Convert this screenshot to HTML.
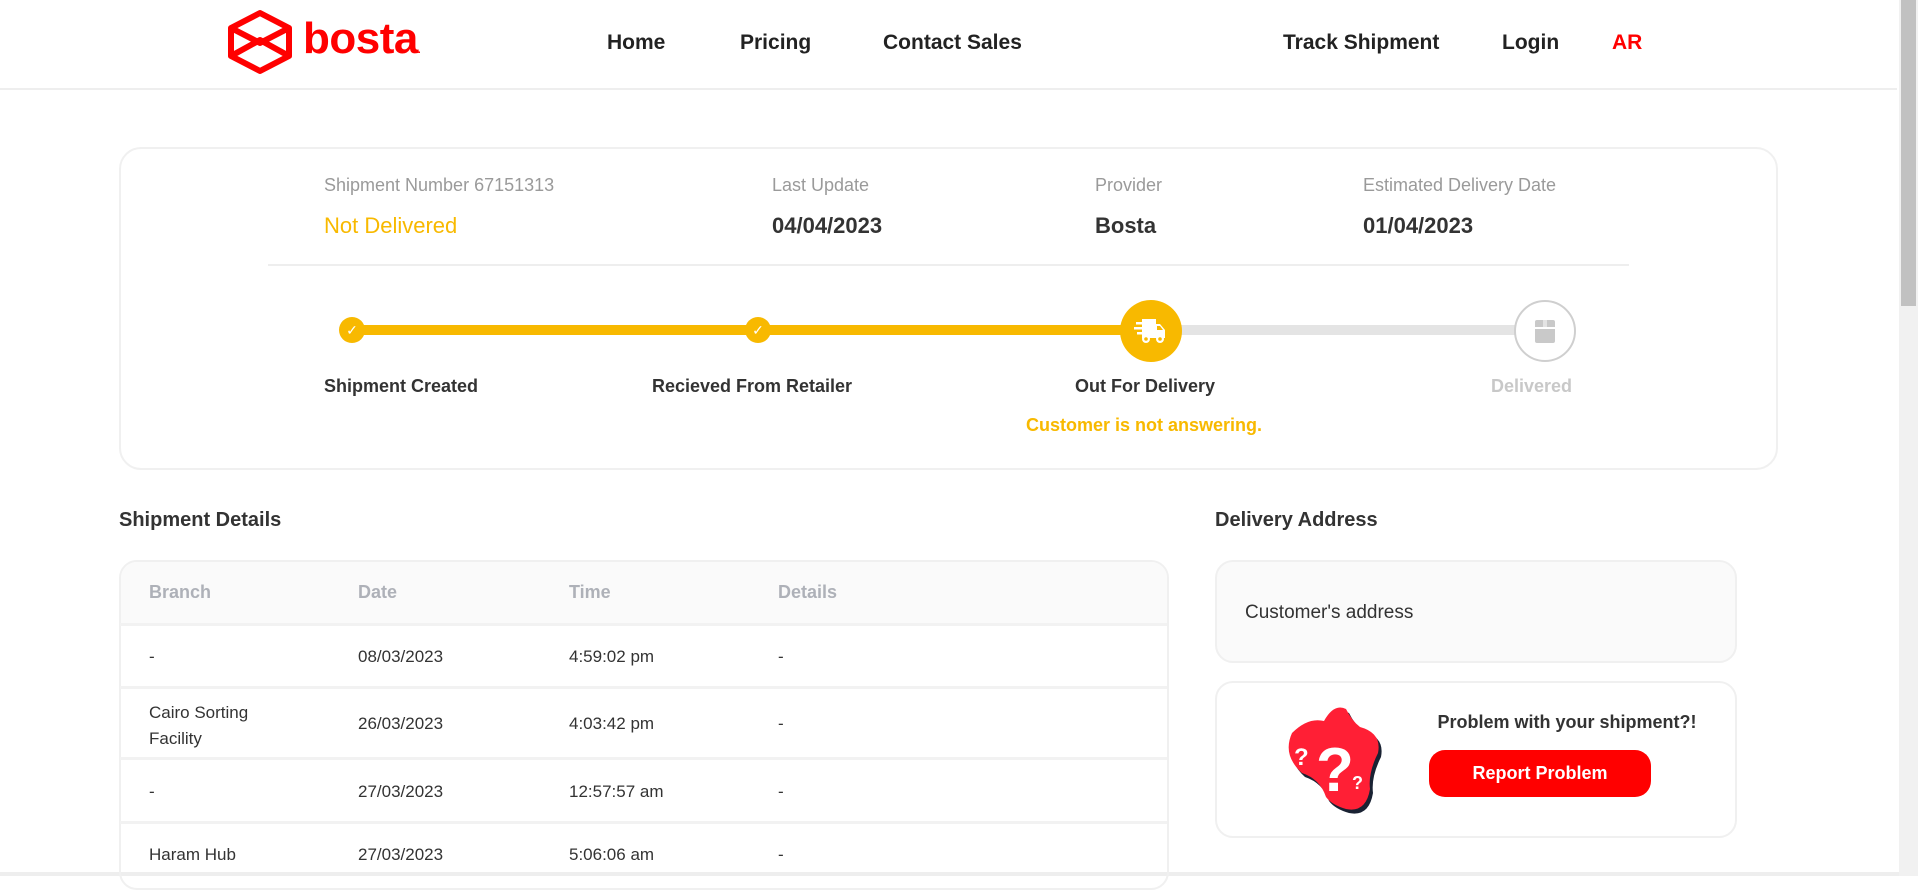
<!DOCTYPE html>
<html><head><meta charset="utf-8"><style>
*{margin:0;padding:0;box-sizing:border-box}
body{width:1918px;height:876px;overflow:hidden;background:#fff;font-family:"Liberation Sans",Arial,sans-serif;color:#333;position:relative}
.a{position:absolute;white-space:nowrap}
.nav{font-weight:bold;font-size:21px;color:#222;top:31px}
.lbl{font-size:18px;color:#9a9a9a;top:175px}
.val{font-size:22px;font-weight:bold;color:#333;top:213px}
.step{font-size:18px;font-weight:bold;color:#333;top:376px}
.th{font-size:18px;font-weight:bold;color:#aeb1b8;top:582px}
.td{font-size:17px;color:#333}
.hl{position:absolute;left:120px;width:1047px;height:3px;background:#f2f2f2}
</style></head><body>
<div class="a" style="left:0;top:88px;width:1897px;height:2px;background:#eee"></div>
<svg class="a" style="left:226px;top:9px" width="68" height="66" viewBox="0 0 68 66">
<g fill="none" stroke="#f00" stroke-width="6" stroke-linejoin="round">
<path d="M34 4 L63 19 L63 47 L34 62 L5 47 L5 19 Z"/>
<path d="M5 19 L34 34 L63 19"/>
<path d="M5 47 L34 31 L63 47"/>
</g></svg>
<div class="a" style="left:303px;top:14px;font-size:44px;font-weight:bold;color:#f00;letter-spacing:-0.5px">bosta<span style="font-size:10px">.</span></div>
<div class="a nav" style="left:607px">Home</div>
<div class="a nav" style="left:740px">Pricing</div>
<div class="a nav" style="left:883px">Contact Sales</div>
<div class="a nav" style="left:1283px">Track Shipment</div>
<div class="a nav" style="left:1502px">Login</div>
<div class="a nav" style="left:1612px;color:#f00">AR</div>
<div class="a" style="left:1899px;top:0;width:19px;height:876px;background:#f1f1f1"></div>
<div class="a" style="left:1901px;top:0;width:15px;height:306px;background:#c1c1c1"></div>
<div class="a" style="left:0;top:872px;width:1899px;height:4px;background:#eee"></div>
<div class="a" style="left:119px;top:147px;width:1659px;height:323px;border:2px solid #f0f0f0;border-radius:22px"></div>
<div class="a lbl" style="left:324px">Shipment Number 67151313</div>
<div class="a lbl" style="left:772px">Last Update</div>
<div class="a lbl" style="left:1095px">Provider</div>
<div class="a lbl" style="left:1363px">Estimated Delivery Date</div>
<div class="a val" style="left:324px;color:#f8b900;font-weight:normal">Not Delivered</div>
<div class="a val" style="left:772px">04/04/2023</div>
<div class="a val" style="left:1095px">Bosta</div>
<div class="a val" style="left:1363px">01/04/2023</div>
<div class="a" style="left:268px;top:264px;width:1361px;height:2px;background:#eee"></div>
<div class="a" style="left:352px;top:325px;width:799px;height:10px;background:#f8b900"></div>
<div class="a" style="left:1151px;top:325px;width:393px;height:10px;background:#e4e4e4"></div>
<div class="a" style="left:339px;top:317px;width:26px;height:26px;border-radius:50%;background:#f8b900;color:#fff;font-size:14px;text-align:center;line-height:26px">✓</div>
<div class="a" style="left:745px;top:317px;width:26px;height:26px;border-radius:50%;background:#f8b900;color:#fff;font-size:14px;text-align:center;line-height:26px">✓</div>
<div class="a" style="left:1120px;top:300px;width:62px;height:62px;border-radius:50%;background:#f8b900"></div>
<svg class="a" style="left:1134px;top:316px" width="34" height="30" viewBox="0 0 34 30">
<g fill="#fff"><path d="M8 3 H22 V8 H26 L31 14 V22 H8 Z"/><circle cx="12" cy="23" r="4"/><circle cx="26" cy="23" r="4"/>
<rect x="2" y="6" width="10" height="2.5"/><rect x="0" y="11" width="10" height="2.5"/><rect x="3" y="16" width="8" height="2.5"/></g>
<g fill="#f8b900"><circle cx="12" cy="23" r="1.8"/><circle cx="26" cy="23" r="1.8"/><path d="M23 10 H26 L29 14 H23 Z"/></g></svg>
<div class="a" style="left:1514px;top:300px;width:62px;height:62px;border-radius:50%;background:#fff;border:2px solid #cfcfcf"></div>
<svg class="a" style="left:1532px;top:318px" width="26" height="26" viewBox="0 0 26 26"><path d="M3 4 Q3 2 5 2 H21 Q23 2 23 4 V9 H3 Z M3 11 H23 V23 Q23 25 21 25 H5 Q3 25 3 23 Z" fill="#c9c9c9"/><rect x="11" y="2" width="4" height="7" fill="#fff" opacity=".5"/></svg>
<div class="a step" style="left:324px">Shipment Created</div>
<div class="a step" style="left:752px;transform:translateX(-50%)">Recieved From Retailer</div>
<div class="a step" style="left:1145px;transform:translateX(-50%)">Out For Delivery</div>
<div class="a step" style="left:1572px;transform:translateX(-100%);color:#c8c8c8">Delivered</div>
<div class="a" style="left:1144px;top:415px;transform:translateX(-50%);font-size:18px;font-weight:bold;color:#f8b900">Customer is not answering.</div>
<div class="a" style="left:119px;top:509px;font-size:20px;font-weight:bold;color:#333">Shipment Details</div>
<div class="a" style="left:1215px;top:509px;font-size:20px;font-weight:bold;color:#333">Delivery Address</div>
<div class="a" style="left:119px;top:560px;width:1050px;height:330px;border:2px solid #f0f0f0;border-radius:18px;overflow:hidden"><div style="height:64px;background:#fafafa"></div></div>
<div class="hl" style="top:623px"></div><div class="hl" style="top:686px"></div><div class="hl" style="top:757px"></div><div class="hl" style="top:821px"></div>
<div class="a th" style="left:149px">Branch</div>
<div class="a th" style="left:358px">Date</div>
<div class="a th" style="left:569px">Time</div>
<div class="a th" style="left:778px">Details</div>
<div class="a td" style="left:149px;top:647px">-</div><div class="a td" style="left:358px;top:647px">08/03/2023</div><div class="a td" style="left:569px;top:647px">4:59:02 pm</div><div class="a td" style="left:778px;top:647px">-</div>
<div class="a td" style="left:149px;top:700px;line-height:26px;white-space:normal">Cairo Sorting<br>Facility</div><div class="a td" style="left:358px;top:714px">26/03/2023</div><div class="a td" style="left:569px;top:714px">4:03:42 pm</div><div class="a td" style="left:778px;top:714px">-</div>
<div class="a td" style="left:149px;top:782px">-</div><div class="a td" style="left:358px;top:782px">27/03/2023</div><div class="a td" style="left:569px;top:782px">12:57:57 am</div><div class="a td" style="left:778px;top:782px">-</div>
<div class="a td" style="left:149px;top:845px">Haram Hub</div><div class="a td" style="left:358px;top:845px">27/03/2023</div><div class="a td" style="left:569px;top:845px">5:06:06 am</div><div class="a td" style="left:778px;top:845px">-</div>
<div class="a" style="left:1215px;top:560px;width:522px;height:103px;border:2px solid #f0f0f0;border-radius:18px;background:#fafafa"></div>
<div class="a" style="left:1245px;top:602px;font-size:19px;color:#333">Customer's address</div>
<div class="a" style="left:1215px;top:681px;width:522px;height:157px;border:2px solid #f0f0f0;border-radius:18px"></div>
<svg class="a" style="left:1278px;top:703px" width="112" height="112" viewBox="0 0 112 112">
<path d="M14 30 Q30 14 46 18 Q56 0 68 6 Q74 18 82 24 Q104 30 100 50 Q90 70 92 86 Q88 110 68 106 Q54 102 48 94 Q42 76 24 70 Q4 52 14 30 Z" fill="#1a2233" transform="translate(3,4)"/>
<path d="M14 30 Q30 14 46 18 Q56 0 68 6 Q74 18 82 24 Q104 30 100 50 Q90 70 92 86 Q88 110 68 106 Q54 102 48 94 Q42 76 24 70 Q4 52 14 30 Z" fill="#ff1f35"/>
<text x="38" y="88" font-family="Liberation Sans,sans-serif" font-weight="bold" font-size="62" fill="#fff">?</text>
<text x="16" y="62" font-family="Liberation Sans,sans-serif" font-weight="bold" font-size="24" fill="#fff">?</text>
<text x="74" y="86" font-family="Liberation Sans,sans-serif" font-weight="bold" font-size="18" fill="#fff">?</text>
</svg>
<div class="a" style="left:1567px;top:712px;transform:translateX(-50%);font-size:18px;font-weight:bold;color:#333">Problem with your shipment?!</div>
<div class="a" style="left:1429px;top:750px;width:222px;height:47px;border-radius:16px;background:#f00;color:#fff;font-size:18px;font-weight:bold;text-align:center;line-height:47px">Report Problem</div>
</body></html>
